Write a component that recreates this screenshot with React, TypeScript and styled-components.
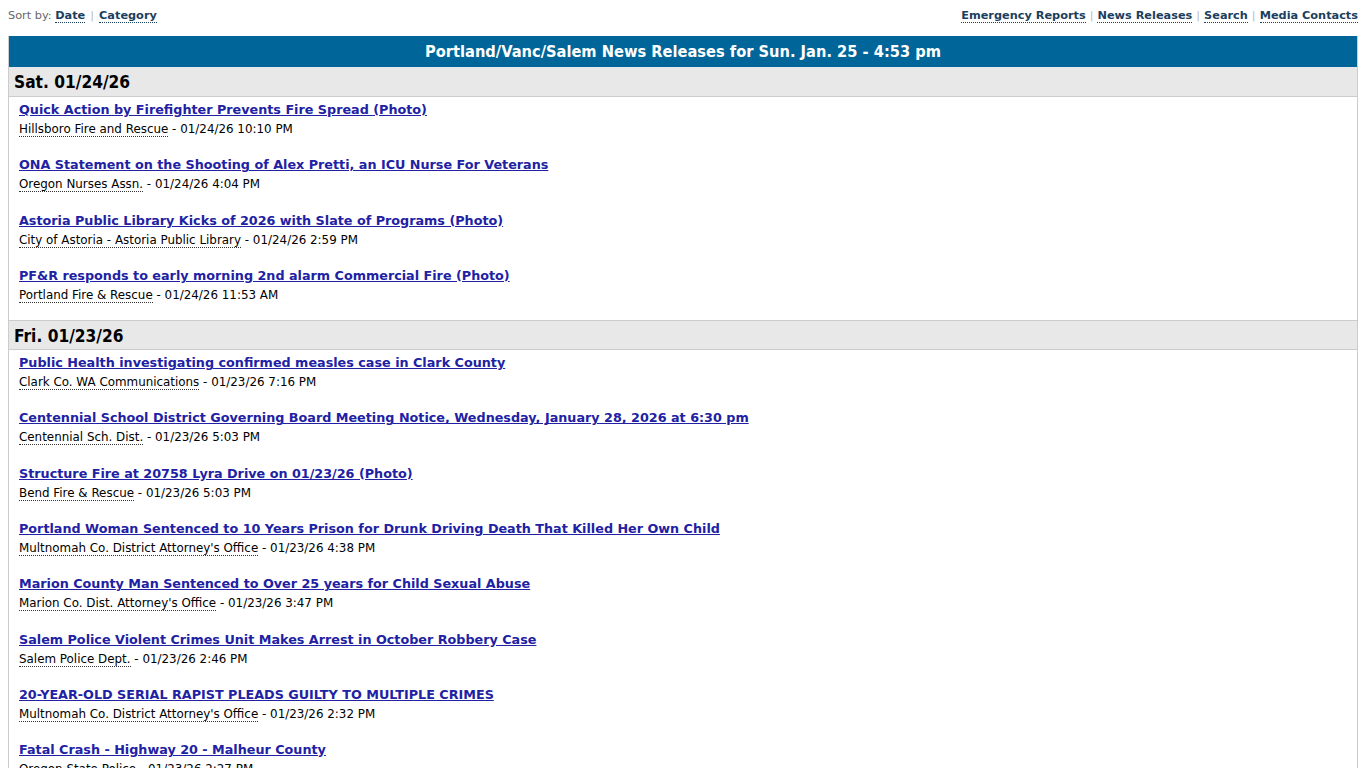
import React from 'react'
import styled, { createGlobalStyle } from 'styled-components'

const Global = createGlobalStyle`
  body {
    margin: 8px;
    background: #fff;
    font-family: Verdana, "DejaVu Sans", sans-serif;
    color: #000;
  }
`;

const TopBar = styled.div`
  display: flex;
  justify-content: space-between;
  align-items: center;
  height: 14px;
  padding: 0 0 14px;
  font-size: 11.3px;
`;

const SortLabel = styled.span`
  color: #666;
`;

const NavLink = styled.a`
  color: #1b3f5e;
  font-weight: bold;
  text-decoration: none;
  border-bottom: 1px dotted #1b3f5e;
`;

const Sep = styled.span<{ tight?: boolean }>`
  color: #bbb;
  margin: 0 ${(p) => (p.tight ? 4 : 5)}px;
`;

const Panel = styled.div`
  border: 1px solid #ccc;
  border-top: none;
`;

const Banner = styled.div`
  background: #006699;
  color: #fff;
  text-align: center;
  font-family: "DejaVu Sans Condensed", "DejaVu Sans", sans-serif;
  font-weight: bold;
  font-size: 16.3px;
  height: 31px;
  line-height: 32px;
`;

const DayHeader = styled.div<{ first?: boolean }>`
  box-sizing: border-box;
  background: #e8e8e8;
  border-bottom: 1px solid #ccc;
  border-top: ${(p) => (p.first ? 'none' : '1px solid #ccc')};
  font-family: "DejaVu Sans Condensed", "DejaVu Sans", sans-serif;
  font-weight: bold;
  font-size: 17.2px;
  height: 30px;
  line-height: 31px;
  padding-left: 5px;
`;

const List = styled.div`
  padding: 4px 10px 0;
`;

const Item = styled.div`
  height: 55.3px;

  &:last-child {
    height: 53.3px;
  }
`;

const Title = styled.a`
  display: block;
  color: #2121a3;
  font-weight: bold;
  font-size: 12.75px;
  line-height: 18px;
  text-decoration: underline;
`;

const Meta = styled.div`
  font-size: 11.9px;
  line-height: 20px;
`;

const Source = styled.span`
  border-bottom: 1px dotted #333;
`;

type Release = { title: string; source: string; time: string };

const days: { label: string; items: Release[] }[] = [
  {
    label: 'Sat. 01/24/26',
    items: [
      { title: 'Quick Action by Firefighter Prevents Fire Spread (Photo)', source: 'Hillsboro Fire and Rescue', time: '01/24/26 10:10 PM' },
      { title: 'ONA Statement on the Shooting of Alex Pretti, an ICU Nurse For Veterans', source: 'Oregon Nurses Assn.', time: '01/24/26 4:04 PM' },
      { title: 'Astoria Public Library Kicks of 2026 with Slate of Programs (Photo)', source: 'City of Astoria - Astoria Public Library', time: '01/24/26 2:59 PM' },
      { title: 'PF&R responds to early morning 2nd alarm Commercial Fire (Photo)', source: 'Portland Fire & Rescue', time: '01/24/26 11:53 AM' },
    ],
  },
  {
    label: 'Fri. 01/23/26',
    items: [
      { title: 'Public Health investigating confirmed measles case in Clark County', source: 'Clark Co. WA Communications', time: '01/23/26 7:16 PM' },
      { title: 'Centennial School District Governing Board Meeting Notice, Wednesday, January 28, 2026 at 6:30 pm', source: 'Centennial Sch. Dist.', time: '01/23/26 5:03 PM' },
      { title: 'Structure Fire at 20758 Lyra Drive on 01/23/26 (Photo)', source: 'Bend Fire & Rescue', time: '01/23/26 5:03 PM' },
      { title: 'Portland Woman Sentenced to 10 Years Prison for Drunk Driving Death That Killed Her Own Child', source: "Multnomah Co. District Attorney's Office", time: '01/23/26 4:38 PM' },
      { title: 'Marion County Man Sentenced to Over 25 years for Child Sexual Abuse', source: "Marion Co. Dist. Attorney's Office", time: '01/23/26 3:47 PM' },
      { title: 'Salem Police Violent Crimes Unit Makes Arrest in October Robbery Case', source: 'Salem Police Dept.', time: '01/23/26 2:46 PM' },
      { title: '20-YEAR-OLD SERIAL RAPIST PLEADS GUILTY TO MULTIPLE CRIMES', source: "Multnomah Co. District Attorney's Office", time: '01/23/26 2:32 PM' },
      { title: 'Fatal Crash - Highway 20 - Malheur County', source: 'Oregon State Police', time: '01/23/26 2:27 PM' },
    ],
  },
];

export default function App() {
  return (
    <>
      <Global />
      <TopBar>
        <span>
          <SortLabel>Sort by: </SortLabel>
          <NavLink href="#">Date</NavLink>
          <Sep>|</Sep>
          <NavLink href="#">Category</NavLink>
        </span>
        <span>
          <NavLink href="#">Emergency Reports</NavLink>
          <Sep tight>|</Sep>
          <NavLink href="#">News Releases</NavLink>
          <Sep tight>|</Sep>
          <NavLink href="#">Search</NavLink>
          <Sep tight>|</Sep>
          <NavLink href="#">Media Contacts</NavLink>
        </span>
      </TopBar>
      <Panel>
        <Banner>Portland/Vanc/Salem News Releases for Sun. Jan. 25 - 4:53 pm</Banner>
        {days.map((d, i) => (
          <div key={d.label}>
            <DayHeader first={i === 0}>{d.label}</DayHeader>
            <List>
              {d.items.map((r) => (
                <Item key={r.title}>
                  <Title href="#">{r.title}</Title>
                  <Meta>
                    <Source>{r.source}</Source> - {r.time}
                  </Meta>
                </Item>
              ))}
            </List>
          </div>
        ))}
      </Panel>
    </>
  )
}
